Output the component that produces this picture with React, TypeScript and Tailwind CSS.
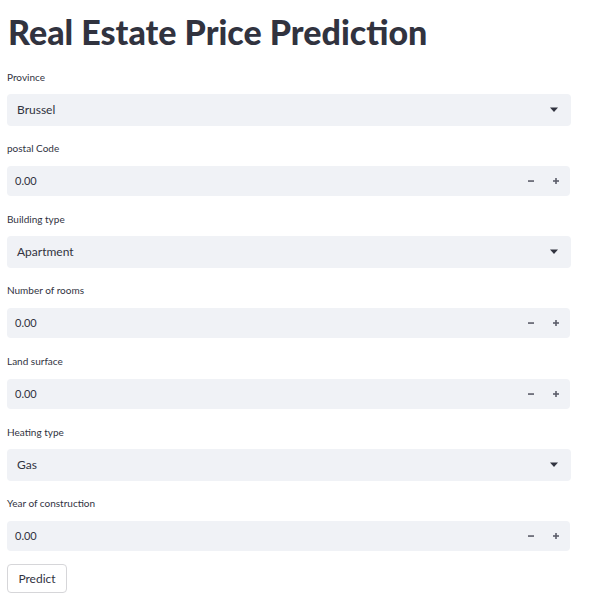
import React from 'react'

const font = { fontFamily: '"Source Sans Pro", Lato, "Noto Sans", sans-serif' }

function Label({ children }: { children: React.ReactNode }) {
  return <div className="h-[17px] text-[10px] leading-[13px] text-[#31333f]">{children}</div>
}

function Caret() {
  return (
    <svg width="10" height="6" viewBox="0 0 10 6" className="text-[#31333f]">
      <path d="M1 0.5h8L5 5z" fill="currentColor" />
    </svg>
  )
}

function SelectField({ label, value }: { label: string; value: string }) {
  return (
    <div className="flex flex-col">
      <Label>{label}</Label>
      <div className="mt-[6px] h-[32px]">
        <div className="flex h-[32px] w-[564px] items-center justify-between rounded-[4px] bg-[#f0f2f6] pl-[10px] pr-[12px]">
          <span className="text-[12px] text-[#31333f]">{value}</span>
          <Caret />
        </div>
      </div>
    </div>
  )
}

function NumberField({ label }: { label: string }) {
  return (
    <div className="flex flex-col">
      <Label>{label}</Label>
      <div className="mt-[6px] h-[32px]">
        <div className="mt-[1px] flex h-[30px] w-[563px] items-center justify-between rounded-[4px] bg-[#f0f2f6] pl-[8px] pr-[10px]">
          <span className="text-[11px] text-[#31333f]">0.00</span>
          <div className="flex items-center gap-[17px] text-[#5c5e6a]">
            <svg width="8" height="8" viewBox="0 0 8 8">
              <rect x="1" y="3.25" width="6" height="1.6" fill="currentColor" />
            </svg>
            <svg width="8" height="8" viewBox="0 0 8 8">
              <rect x="1" y="3.2" width="6" height="1.6" fill="currentColor" />
              <rect x="3.2" y="1" width="1.6" height="6" fill="currentColor" />
            </svg>
          </div>
        </div>
      </div>
    </div>
  )
}

export default function App() {
  return (
    <div className="min-h-[599px] bg-white pl-[7px] pt-[10px]" style={font}>
      <h1 className="h-[61px] pl-[1px] text-[34px] font-black leading-[44px] text-[#31333f]">
        Real Estate Price Prediction
      </h1>
      <div className="flex flex-col gap-[16px]">
        <SelectField label="Province" value="Brussel" />
        <NumberField label="postal Code" />
        <SelectField label="Building type" value="Apartment" />
        <NumberField label="Number of rooms" />
        <NumberField label="Land surface" />
        <SelectField label="Heating type" value="Gas" />
        <NumberField label="Year of construction" />
      </div>
      <button className="mt-[12px] h-[29px] w-[60px] rounded-[4px] border border-[#d6d6d9] bg-white text-[12px] text-[#31333f]">
        Predict
      </button>
    </div>
  )
}
